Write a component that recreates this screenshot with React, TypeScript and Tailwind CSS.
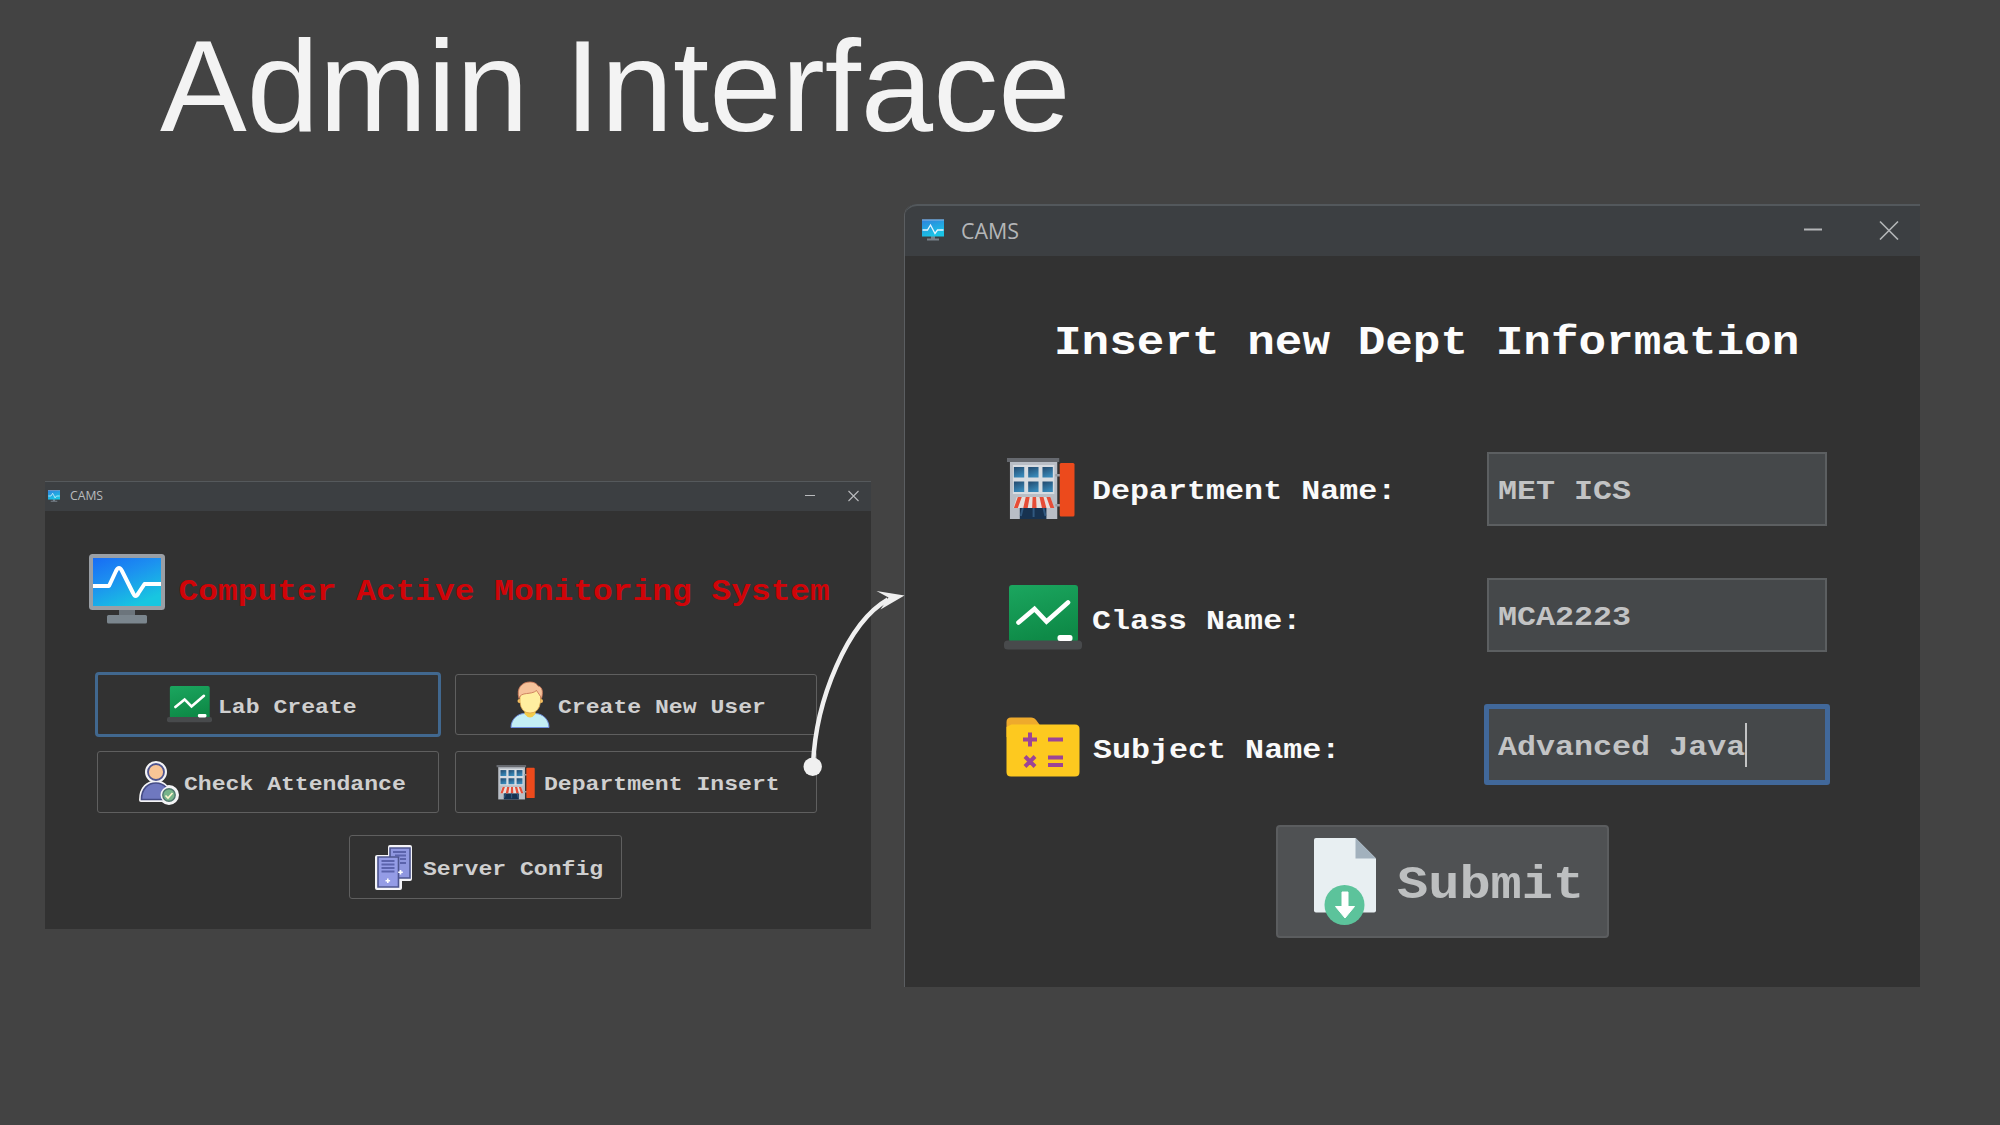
import type { ReactNode } from "react";

const mono = "font-['Liberation_Mono','Courier_New',monospace] font-bold whitespace-pre";
const squat = "inline-block origin-[50%_77%] scale-y-[0.9]";

function MonitorIcon({ className, id }: { className: string; id: string }) {
  return (
    <svg viewBox="0 0 76 70" preserveAspectRatio="none" className={className}>
      <defs>
        <linearGradient id={id} x1="0" y1="0" x2="0.6" y2="1">
          <stop offset="0" stopColor="#176cf5" />
          <stop offset="0.45" stopColor="#1c90f0" />
          <stop offset="1" stopColor="#18c6e0" />
        </linearGradient>
      </defs>
      <path d="M30 54h16v8h-16z" fill="#6c757c" />
      <rect x="18" y="61" width="40" height="8.6" rx="1.5" fill="#7b868e" />
      <rect x="0" y="0" width="76" height="56" rx="3.5" fill="#9a9fa5" />
      <rect x="4" y="4" width="68" height="48" fill={`url(#${id})`} />
      <path d="M4 32h16l7-15q3-6 6 0l11 22q2.500 6 5.500 0l6-9h16.500" fill="none" stroke="#fff" strokeWidth="4" strokeLinejoin="round" />
    </svg>
  );
}

function TitleMonitorIcon({ className, id }: { className: string; id: string }) {
  return (
    <svg viewBox="0 0 22 22" className={className}>
      <defs>
        <linearGradient id={id} x1="0" y1="0" x2="0.4" y2="1">
          <stop offset="0" stopColor="#2f80dc" />
          <stop offset="1" stopColor="#19c4e6" />
        </linearGradient>
      </defs>
      <path d="M5 19.500h12v2H5zM9 17h4v3H9z" fill="#77818a" />
      <rect x="0" y="0.500" width="22" height="17" fill={`url(#${id})`} />
      <path d="M0 1h22" stroke="#8fb4dc" />
      <path d="M0.500 11h5l3-5 4.500 8.500 2.500-3.500h6" fill="none" stroke="#e4f5ff" strokeWidth="1.300" />
    </svg>
  );
}

function BoardIcon({ className, id }: { className: string; id: string }) {
  return (
    <svg viewBox="0 0 78 66" preserveAspectRatio="none" className={className}>
      <defs>
        <linearGradient id={id} x1="0" y1="0" x2="0.3" y2="1">
          <stop offset="0" stopColor="#1ba65f" />
          <stop offset="1" stopColor="#0e8a47" />
        </linearGradient>
      </defs>
      <rect x="5" y="0" width="69" height="57" rx="3" fill={`url(#${id})`} />
      <rect x="0" y="55.500" width="78" height="9" rx="3.500" fill="#484a4c" />
      <rect x="53.500" y="50" width="15" height="6" rx="2.500" fill="#fff" />
      <path d="M14.500 37.500 30.500 24l12 12.500L64 17.500" fill="none" stroke="#fff" strokeWidth="4.600" strokeLinecap="round" strokeLinejoin="miter" />
    </svg>
  );
}

function StoreIcon({ className, id }: { className: string; id: string }) {
  return (
    <svg viewBox="0 0 70 62" preserveAspectRatio="none" className={className}>
      <defs>
        <linearGradient id={id} x1="0" y1="0" x2="0.4" y2="1">
          <stop offset="0" stopColor="#23496d" />
          <stop offset="1" stopColor="#3787b7" />
        </linearGradient>
      </defs>
      <path d="M4 3h48v58h-48z" fill="#b9bec6" />
      <path d="M1 0h53v4h-53z" fill="#66696f" />
      <path d="M50 16h7v2.500h-7zM50 46h7v2.500h-7z" fill="#9a9fa6" />
      <rect x="54.500" y="5" width="15" height="53.500" rx="1.500" fill="#ec4a1c" />
      <path d="M7 7h42v29h-42z" fill="#d8dce1" />
      {[8, 22.5, 37].map((x) =>
        [9, 23.5].map((y) => <rect key={`${x}-${y}`} x={x} y={y} width="10.500" height="10.500" fill={`url(#${id})`} />),
      )}
      <path d="M14 50h27v11h-27z" fill="#173250" />
      <path d="M11 39h34l3.500 11h-41z" fill="#e6dedb" />
      <path d="M12 39h4l-4 11h-4zM20 39h4l-2 11h-4.500zM27 39h3.500l.500 11h-4.500zM34 39h4l3 11h-4.500zM41 39h4l4 11h-4z" fill="#e64c36" />
      <path d="M17 50l-2 8M28 50v9M38 50l2 8" stroke="#30587f" strokeWidth="2" />
    </svg>
  );
}

function UserIcon() {
  return (
    <svg viewBox="0 0 40 48" className="h-[48px] w-[40px] shrink-0">
      <path d="M1 46.500C1 38 8 32.500 14.500 32.500h11C32 32.500 39 38 39 46.500z" fill="#c3eef5" stroke="#6f8fe0" strokeWidth="1" />
      <path d="M14.500 27h11v6q-5.500 7-11 0z" fill="#f3cb49" />
      <circle cx="9.500" cy="20" r="2" fill="#f5c060" />
      <circle cx="31" cy="20" r="2" fill="#f5c060" />
      <path d="M10 15q0-7 10-7t10.500 7v6q-1.500 11-10.500 11T10 21z" fill="#ffeea0" stroke="#e0a44c" strokeWidth="0.800" />
      <path d="M9 17.500C6 7 12 1 20 1c4.500 0 7 2 8 4 5 1 5 7 3.500 12.500C30 14 28 12 26.500 9.500 21 14.500 11 10 9 17.500z" fill="#f6c39b" stroke="#c9795a" strokeWidth="0.900" />
    </svg>
  );
}

function AttendanceIcon() {
  return (
    <svg viewBox="0 0 42 45" className="h-[45px] w-[42px] shrink-0">
      <g stroke="#f4f4f6" strokeWidth="4" strokeLinejoin="round" fill="#f4f4f6">
        <circle cx="18" cy="12" r="9" />
        <path d="M3 40C3 28 10 22.500 18 22.500S31 28 32 40z" />
        <circle cx="31" cy="35" r="8" />
      </g>
      <circle cx="18" cy="12" r="8" fill="#f8c596" stroke="#4f5590" strokeWidth="1.800" />
      <path d="M3.500 39.500C3.500 28.500 10 23 18 23S32 29 32 39.500z" fill="#6f78bf" stroke="#454c86" strokeWidth="1.600" />
      <circle cx="31" cy="35" r="8.500" fill="#f4f4f6" />
      <circle cx="31" cy="35" r="6.200" fill="#77b48a" stroke="#4f766d" strokeWidth="1.400" />
      <path d="m27.500 35.500 2.500 2.500 4.500-5" fill="none" stroke="#fff6cf" strokeWidth="1.600" />
    </svg>
  );
}

function ServerIcon() {
  return (
    <svg viewBox="0 0 38 45" className="h-[45px] w-[38px] shrink-0">
      <path d="M15 2h20v32H25v9H2V12h13z" fill="none" stroke="#f4f4f8" strokeWidth="4" strokeLinejoin="round" />
      <path d="M15 3h20v30H15z" fill="#8f97e0" stroke="#4d558f" strokeWidth="1.600" />
      <path d="M3 12h20.500v30H3z" fill="#949ce6" stroke="#4d558f" strokeWidth="1.600" />
      <path d="M18 7h13M20 10.500h11M25 14h6M25 18h6M6.500 16h13M6.500 19.500h13M6.500 23h13M6.500 26.500h13" stroke="#5b63ac" strokeWidth="1.800" />
      <path d="M12.800 33.500v4.500M10.500 35.700h4.600M25.500 25v4.500M23.200 27.200h4.600" stroke="#fff" strokeWidth="1.600" />
    </svg>
  );
}

function FolderIcon() {
  return (
    <svg viewBox="0 0 74 60" className="mt-[5px] mr-[9px] h-[60px] w-[74px] shrink-0">
      <path d="M0.500 20V5q0-4.500 4.500-4.500h20q3.500 0 5.500 3l4 5.500v12z" fill="#eeaa2c" />
      <path d="M0.500 10q0 0 5-2.500H69q4.500 0 4.500 4.500v43q0 4.500-4.500 4.500H5Q.500 59.500.500 55z" fill="#fdc91f" />
      <g stroke="#9c4496" strokeWidth="4" fill="none">
        <path d="M24 15.500v14M17 22.500h14M42 22.500h15M42 40.500h15M42 48h15M19 39.500l10 10M29 39.500l-10 10" />
      </g>
    </svg>
  );
}

function SubmitIcon() {
  return (
    <svg viewBox="0 0 62 88" className="h-[88px] w-[62px] shrink-0">
      <path d="M0 2q0-2 2-2h39.500L62 20.500V72.500q0 2-2 2H2q-2 0-2-2z" fill="#e8eff2" />
      <path d="M41.500 0 62 20.500H41.500z" fill="#a2b1bd" />
      <circle cx="30.500" cy="67" r="20" fill="#5cc39b" />
      <path d="M28 54h6v14.500h6.500L31 80l-9.500-11.500H28z" fill="#fff" stroke="#fff" strokeLinejoin="round" />
    </svg>
  );
}

function MenuButton({ className, icon, children }: { className: string; icon: ReactNode; children: string }) {
  return (
    <button className={`flex shrink-0 items-center rounded-[3px] text-[23.1px] leading-none text-[#cfcfcf] ${mono} ${className}`}>
      {icon}
      <span className={`mt-[6px] ${squat}`}>{children}</span>
    </button>
  );
}

function MenuWindow() {
  return (
    <section className="mt-[277px] flex h-[448px] w-[826px] shrink-0 flex-col bg-[#323232]">
      <header className="flex h-[30px] shrink-0 items-center border-t border-[#55595c] bg-[#3c3f42] pl-[3px]">
        <TitleMonitorIcon id="title-menu" className="mb-[2px] h-[12px] w-[12px]" />
        <span className="ml-[10px] font-['Open_Sans',sans-serif] text-[12.2px] leading-none text-[#b9bbbd]">CAMS</span>
        <svg viewBox="0 0 54 12" className="mr-[12px] mb-[2px] ml-auto h-[12px] w-[54px]" fill="none" stroke="#b9bbbd">
          <path d="M0 5.500h10" />
          <path d="m43.500 1 10 10m0-10-10 10" strokeWidth="1.100" />
        </svg>
      </header>
      <div className="mt-[43px] ml-[44px] flex">
        <MonitorIcon id="screen-logo" className="h-[70px] w-[76px]" />
        <h2 className={`mt-[21px] ml-[13.5px] text-[32.9px] leading-none text-[#d00408] ${mono} ${squat}`}>Computer Active Monitoring System</h2>
      </div>
      <div className="mt-[48px] ml-[50px] flex items-center gap-[14px]">
        <MenuButton
          className="h-[65px] w-[346px] rounded-[4px] border-3 border-[#41688f] pl-[69px]"
          icon={<BoardIcon id="board-menu" className="mr-[6px] h-[37px] w-[45px] shrink-0" />}
        >
          Lab Create
        </MenuButton>
        <MenuButton className="h-[61px] w-[362px] gap-[8px] border border-[#5f5f5f] pl-[54px]" icon={<UserIcon />}>
          Create New User
        </MenuButton>
      </div>
      <div className="mt-[14px] ml-[52px] flex gap-[16px]">
        <MenuButton className="h-[62px] w-[342px] gap-[4px] border border-[#5f5f5f] pl-[40px]" icon={<AttendanceIcon />}>
          Check Attendance
        </MenuButton>
        <MenuButton
          className="h-[62px] w-[362px] border border-[#5f5f5f] pl-[40px]"
          icon={<StoreIcon id="glass-menu" className="mr-[9px] h-[35px] w-[39px] shrink-0" />}
        >
          Department Insert
        </MenuButton>
      </div>
      <MenuButton className="mt-[22px] ml-[304px] h-[64px] w-[273px] gap-[10px] border border-[#5f5f5f] pl-[25px]" icon={<ServerIcon />}>
        Server Config
      </MenuButton>
    </section>
  );
}

function FormRow({ className, icon, label, children }: { className: string; icon: ReactNode; label: ReactNode; children: ReactNode }) {
  return (
    <div className={`flex items-center ${className}`}>
      <div className="flex w-[90px] shrink-0 justify-center">{icon}</div>
      <div className={`w-[400px] shrink-0 text-[31.7px] leading-none text-[#fafafa] ${mono}`}>{label}</div>
      {children}
    </div>
  );
}

const field = "flex shrink-0 items-center bg-[#45484a] text-[31.7px] leading-none text-[#c2c3c4]";

function FormWindow() {
  return (
    <section className="flex h-[783px] w-[1016px] shrink-0 flex-col rounded-tl-[12px] border-l border-[#5b5e61] bg-[#323232]">
      <header className="flex h-[52px] shrink-0 items-center rounded-tl-[12px] border-t-2 border-[#53585c] bg-[#3c3f42] pl-[17px]">
        <TitleMonitorIcon id="title-form" className="mb-[2px] h-[22px] w-[22px]" />
        <span className="mb-[1px] ml-[17px] font-['Open_Sans',sans-serif] text-[21.4px] leading-none text-[#b4b6b8]">CAMS</span>
        <svg viewBox="0 0 96 20" className="mr-[21px] mb-[2px] ml-auto h-[20px] w-[96px]" fill="none" stroke="#b4b6b8">
          <path d="M1 9.500h18" strokeWidth="2" />
          <path d="m77 1.500 18 18m0-18-18 18" strokeWidth="1.600" />
        </svg>
      </header>
      <h2 className={`mt-[63px] ml-[149px] text-[46px] leading-none text-[#fdfdfd] ${mono} ${squat}`}>Insert new Dept Information</h2>
      <FormRow
        className="mt-[87px] ml-[97px] h-[74px]"
        label={<span className={`mt-[5px] ${squat}`}>Department Name:</span>}
        icon={<StoreIcon id="glass-form" className="mr-[14px] h-[62px] w-[69px] shrink-0" />}
      >
        <div className={`h-[74px] w-[340px] border-2 border-[#5c5f61] pl-[9px] ${field} ${mono} -ml-[5px]`}>
          <span className={`mt-[5px] ${squat}`}>MET ICS</span>
        </div>
      </FormRow>
      <FormRow
        className="mt-[52px] ml-[97px] h-[74px]"
        label={<span className={`mt-[13px] ${squat}`}>Class Name:</span>}
        icon={<BoardIcon id="board-form" className="mt-[6px] mr-[8px] h-[66px] w-[78px] shrink-0" />}
      >
        <div className={`h-[74px] w-[340px] border-2 border-[#5c5f61] pl-[9px] ${field} ${mono} -ml-[5px]`}>
          <span className={`mt-[6px] ${squat}`}>MCA2223</span>
        </div>
      </FormRow>
      <FormRow
        className="mt-[52px] ml-[97px] h-[81px]"
        label={<span className={`mt-[13px] ml-[1px] ${squat}`}>Subject Name:</span>}
        icon={<FolderIcon />}
      >
        <div className={`h-[81px] w-[346px] rounded-[3px] border-5 border-[#41689a] pl-[9px] ${field} ${mono} -ml-[8px]`}>
          <span className={`mt-[6px] ${squat}`}>Advanced Java</span>
          <span className="h-[44px] w-[2px] bg-[#c2c3c4]" />
        </div>
      </FormRow>
      <button className={`mt-[40px] ml-[371px] flex h-[113px] w-[333px] shrink-0 items-center rounded-[4px] border-2 border-[#5b5d5f] bg-[#4f5153] pl-[36px] text-[52px] leading-none text-[#bdbfc0] ${mono}`}>
        <SubmitIcon />
        <span className={`mt-[7px] ml-[21px] ${squat}`}>Submit</span>
      </button>
    </section>
  );
}

export default function App() {
  return (
    <main className="relative flex h-[1125px] w-[2000px] flex-col overflow-hidden bg-[#434343]">
      <h1 className="h-[204px] shrink-0 pt-[16px] pl-[160px] font-['Liberation_Sans',Arial,sans-serif] text-[130px] leading-[140px] whitespace-nowrap text-[#f3f3f3]">
        Admin Interface
      </h1>
      <div className="flex gap-[33px] pl-[45px]">
        <MenuWindow />
        <FormWindow />
      </div>
      <svg viewBox="0 0 110 200" className="absolute top-[585px] left-[800px] h-[200px] w-[110px]">
        <path d="M13 182C15 115 48 37 88 14.500" fill="none" stroke="#f0f0f0" strokeWidth="4.500" />
        <circle cx="12.700" cy="181.700" r="9.200" fill="#f0f0f0" />
        <path d="M104.500 10.500 76.500 6 88.500 12.500 80.500 24.500z" fill="#f0f0f0" />
      </svg>
    </main>
  );
}
